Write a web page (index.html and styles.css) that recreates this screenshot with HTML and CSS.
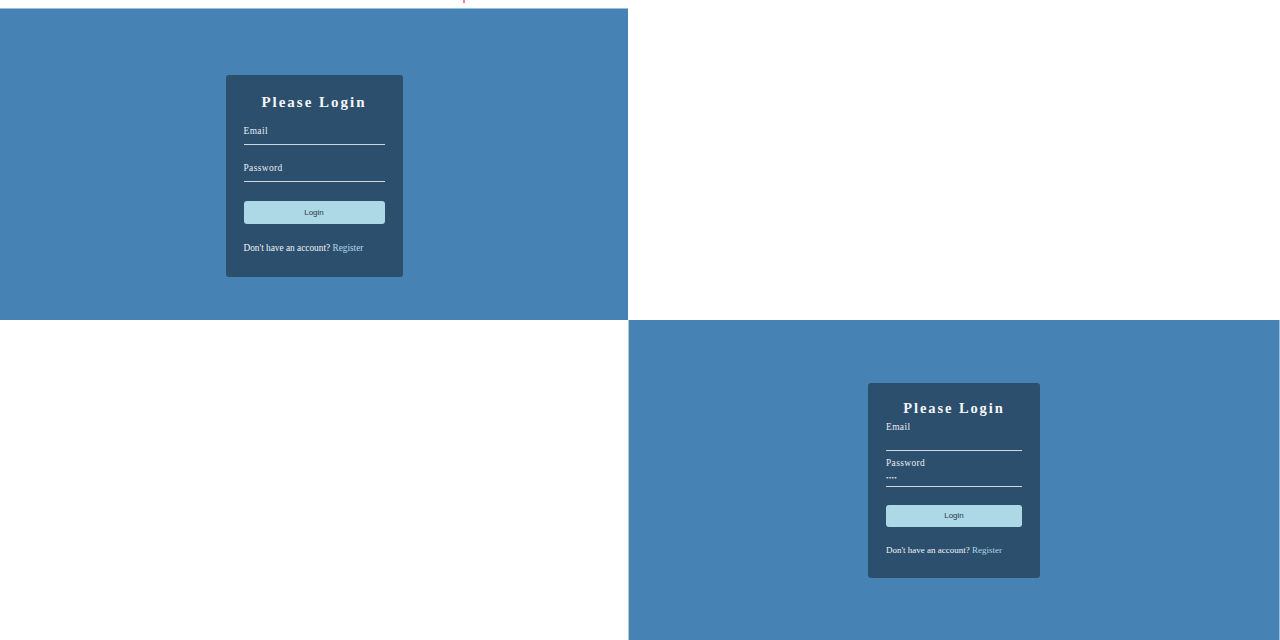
FILE: index.html
```html
<!DOCTYPE html>
<html lang="en">
<head>
<meta charset="utf-8">
<title>Please Login</title>
<link rel="stylesheet" href="styles.css">
</head>
<body>
<div class="topstrip"><span class="mark"></span></div>
<div class="grid">
  <section class="panel panel-a">
    <form class="card card-a">
      <h2 class="title">Please Login</h2>
      <div class="field">
        <label class="label">Email</label>
        <div class="input"></div>
      </div>
      <div class="field">
        <label class="label">Password</label>
        <div class="input"></div>
      </div>
      <button type="button" class="btn">Login</button>
      <p class="note">Don't have an account? <a class="link">Register</a></p>
    </form>
  </section>
  <div class="blank"></div>
  <div class="blank"></div>
  <section class="panel panel-b">
    <form class="card card-b">
      <h2 class="title">Please Login</h2>
      <div class="field">
        <label class="label">Email</label>
        <div class="input"></div>
      </div>
      <div class="field">
        <label class="label">Password</label>
        <div class="input"><span class="dots">••••</span></div>
      </div>
      <button type="button" class="btn">Login</button>
      <p class="note">Don't have an account? <a class="link">Register</a></p>
    </form>
  </section>
</div>
</body>
</html>
```

FILE: styles.css
```css
html, body {
  margin: 0;
  padding: 0;
  background: #ffffff;
  width: 1280px;
  height: 640px;
  overflow: hidden;
  font-family: "Liberation Serif", "Times New Roman", serif;
}

.topstrip {
  height: 8px;
  display: flex;
  padding-left: 463px;
}

.mark {
  width: 2px;
  height: 3px;
  background: #e8838a;
}

.grid {
  display: grid;
  grid-template-columns: 628px 652px;
  grid-template-rows: 312px 320px;
}

.panel {
  background: #4682b4;
  display: flex;
  justify-content: center;
}

.panel-a {
  align-items: flex-start;
  padding-top: 67px;
  box-sizing: border-box;
  border-top: 1px solid #9fbfd8;
}

.panel-b {
  align-items: center;
  border-right: 1px solid #9fbfd8;
  border-left: 1px solid #b9c7d2;
  box-sizing: border-box;
}

.card {
  background: #2c4f6e;
  border-radius: 3px;
  color: #ffffff;
  display: flex;
  flex-direction: column;
  box-sizing: border-box;
}

.card-a {
  width: 177px;
  height: 202px;
  padding: 18px 18px 0 18px;
  margin-top: -1px;
}

.card-b {
  width: 172px;
  height: 195px;
  padding: 16px 18px 0 18px;
}

.title {
  margin: 0;
  font-size: 15px;
  line-height: 18px;
  font-weight: bold;
  letter-spacing: 2px;
  text-align: center;
  color: #f4f6f8;
}

.card-b .title {
  font-size: 14.5px;
  letter-spacing: 1.9px;
}

.label {
  display: block;
  font-size: 9.4px;
  line-height: 10px;
  letter-spacing: 0.4px;
  color: #e8edf2;
}

.input {
  border-bottom: 1px solid #cfd8e0;
  box-sizing: content-box;
}

.dots {
  display: block;
  font-size: 7px;
  line-height: 8px;
  letter-spacing: 0.3px;
  color: #e8edf2;
}

.card-a .title { margin-bottom: 15px; }
.card-a .field + .field { margin-top: 18px; }
.card-a .input { height: 8px; }

.card-b .title { margin-bottom: 5px; }
.card-b .field + .field { margin-top: 7px; }
.card-b .input { height: 18px; display: flex; align-items: flex-end; }
.card-b .input .dots { margin-bottom: 4px; }

.btn {
  border: none;
  border-radius: 3px;
  background: #add8e6;
  color: #2b3a47;
  font-family: "Liberation Sans", Arial, sans-serif;
  font-size: 8px;
  padding: 0;
  cursor: pointer;
}

.card-a .btn { margin-top: 19px; height: 23px; }
.card-b .btn { margin-top: 18px; height: 22px; }

.note {
  margin: 18px 0 0 0;
  font-size: 9.3px;
  line-height: 12px;
  color: #f0f3f6;
}

.card-b .note {
  margin-top: 17px;
  font-size: 9px;
}

.link {
  color: #add8e6;
  text-decoration: none;
}
```
